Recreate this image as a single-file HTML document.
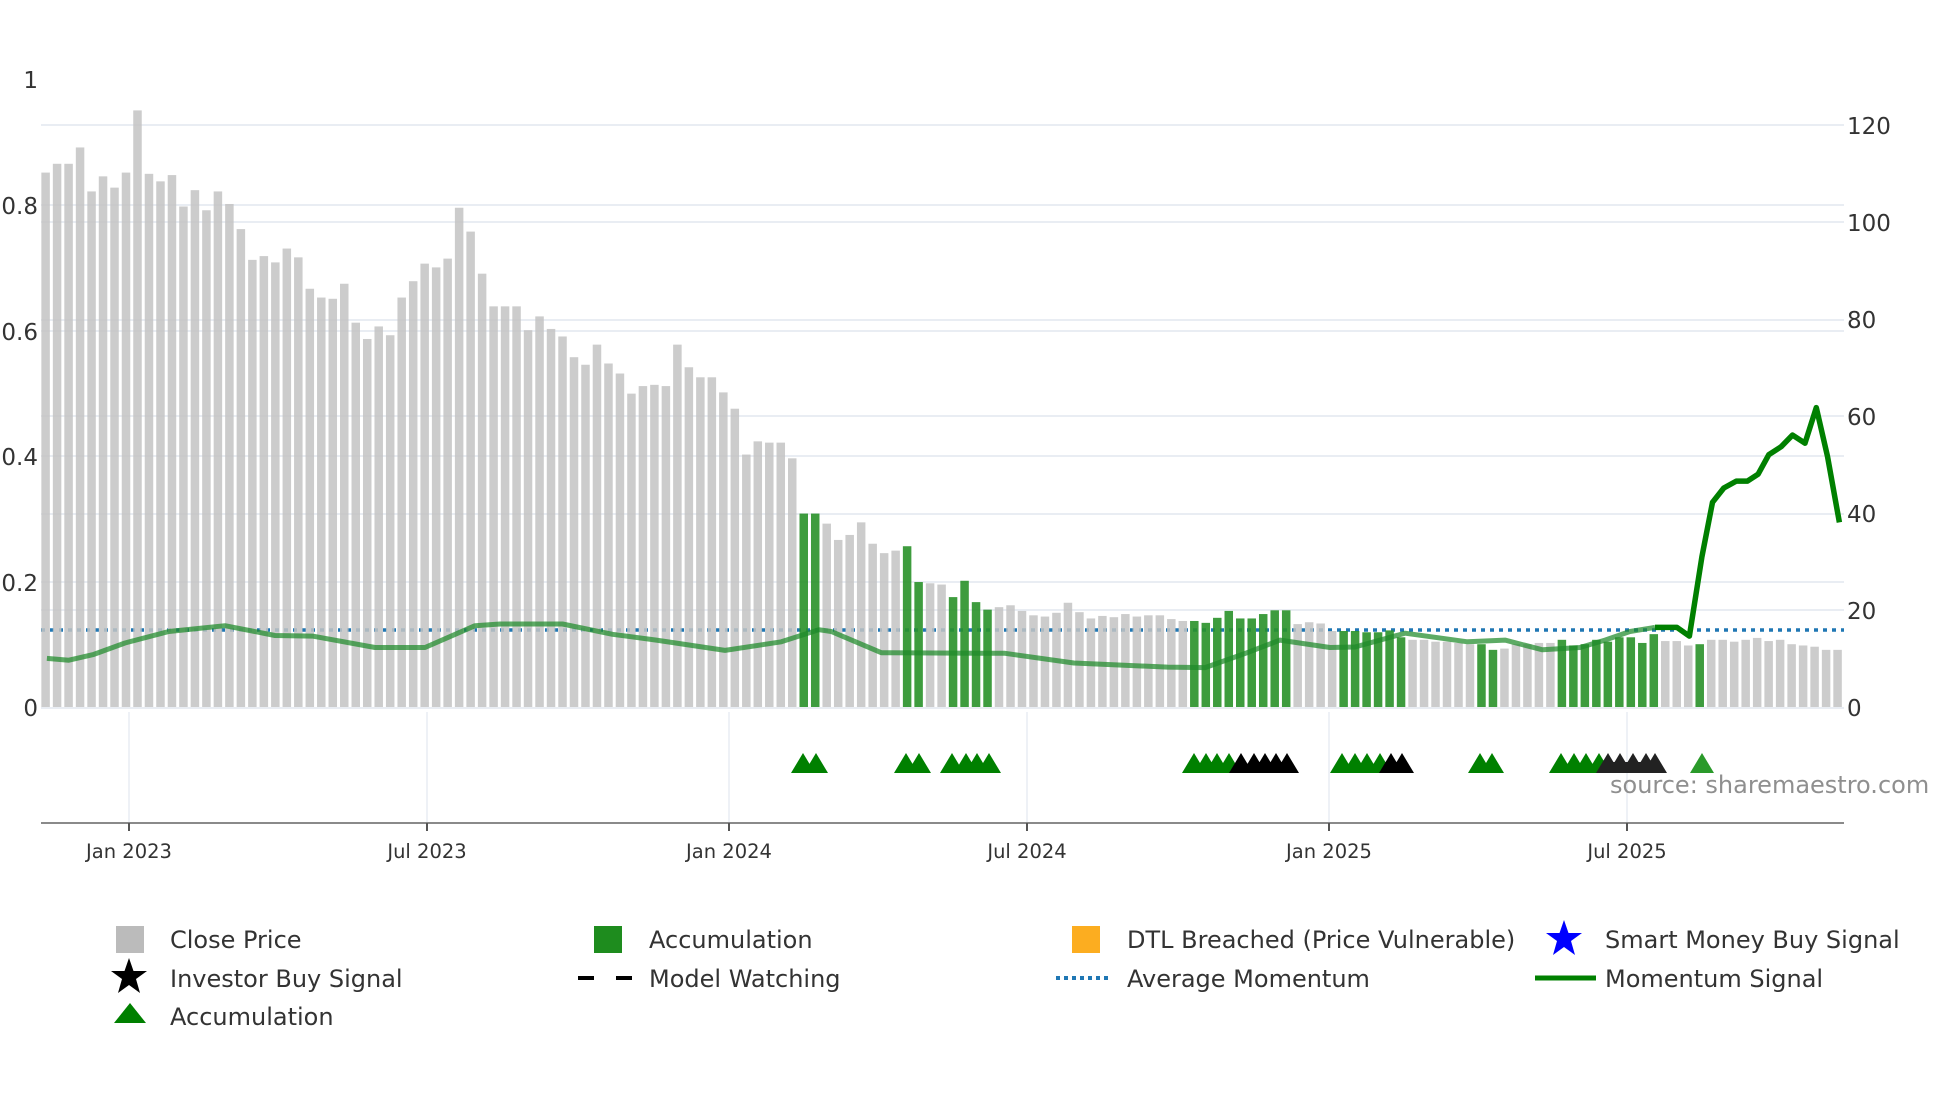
<!DOCTYPE html>
<html><head><meta charset="utf-8"><style>
html,body{margin:0;padding:0;background:#fff;width:1960px;height:1102px;overflow:hidden}
svg text{font-family:"DejaVu Sans","Liberation Sans",sans-serif}
</style></head><body>
<svg width="1960" height="1102" viewBox="0 0 1960 1102" xmlns="http://www.w3.org/2000/svg">
<rect width="1960" height="1102" fill="#fff"/>
<g stroke="#e9edf3" stroke-width="2">
<line x1="41" x2="1844" y1="125" y2="125"/><line x1="41" x2="1844" y1="205" y2="205"/>
<line x1="41" x2="1844" y1="222" y2="222"/><line x1="41" x2="1844" y1="320" y2="320"/>
<line x1="41" x2="1844" y1="331" y2="331"/><line x1="41" x2="1844" y1="416" y2="416"/>
<line x1="41" x2="1844" y1="456" y2="456"/><line x1="41" x2="1844" y1="514" y2="514"/>
<line x1="41" x2="1844" y1="582" y2="582"/><line x1="41" x2="1844" y1="610" y2="610"/>
<line x1="41" x2="1844" y1="708" y2="708"/>
</g>
<g stroke="#eef1f6" stroke-width="2">
<line x1="129" x2="129" y1="712" y2="823"/><line x1="427" x2="427" y1="712" y2="823"/>
<line x1="729" x2="729" y1="712" y2="823"/><line x1="1027" x2="1027" y1="712" y2="823"/>
<line x1="1329" x2="1329" y1="712" y2="823"/><line x1="1627" x2="1627" y1="712" y2="823"/>
</g>
<line x1="41" x2="1844" y1="630" y2="630" stroke="#1f77b4" stroke-width="3.5" stroke-dasharray="4 5"/>
<g transform="translate(45.6,707) scale(11.487,-628)" fill="#c4c4c4" opacity="0.86">
<rect x="-0.37" width="0.74" height=".851"/><rect x="0.63" width="0.74" height=".865"/><rect x="1.63" width="0.74" height=".865"/><rect x="2.63" width="0.74" height=".891"/><rect x="3.63" width="0.74" height=".821"/><rect x="4.63" width="0.74" height=".845"/><rect x="5.63" width="0.74" height=".827"/><rect x="6.63" width="0.74" height=".851"/><rect x="7.63" width="0.74" height=".950"/><rect x="8.63" width="0.74" height=".849"/>
<rect x="9.63" width="0.74" height=".837"/><rect x="10.63" width="0.74" height=".847"/><rect x="11.63" width="0.74" height=".797"/><rect x="12.63" width="0.74" height=".823"/><rect x="13.63" width="0.74" height=".791"/><rect x="14.63" width="0.74" height=".821"/><rect x="15.63" width="0.74" height=".801"/><rect x="16.63" width="0.74" height=".761"/><rect x="17.63" width="0.74" height=".712"/><rect x="18.63" width="0.74" height=".718"/>
<rect x="19.63" width="0.74" height=".708"/><rect x="20.63" width="0.74" height=".730"/><rect x="21.63" width="0.74" height=".716"/><rect x="22.63" width="0.74" height=".666"/><rect x="23.63" width="0.74" height=".652"/><rect x="24.63" width="0.74" height=".650"/><rect x="25.63" width="0.74" height=".674"/><rect x="26.63" width="0.74" height=".612"/><rect x="27.63" width="0.74" height=".586"/><rect x="28.63" width="0.74" height=".606"/>
<rect x="29.63" width="0.74" height=".592"/><rect x="30.63" width="0.74" height=".652"/><rect x="31.63" width="0.74" height=".678"/><rect x="32.63" width="0.74" height=".706"/><rect x="33.63" width="0.74" height=".700"/><rect x="34.63" width="0.74" height=".714"/><rect x="35.63" width="0.74" height=".795"/><rect x="36.63" width="0.74" height=".757"/><rect x="37.63" width="0.74" height=".690"/><rect x="38.63" width="0.74" height=".638"/>
<rect x="39.63" width="0.74" height=".638"/><rect x="40.63" width="0.74" height=".638"/><rect x="41.63" width="0.74" height=".600"/><rect x="42.63" width="0.74" height=".622"/><rect x="43.63" width="0.74" height=".602"/><rect x="44.63" width="0.74" height=".590"/><rect x="45.63" width="0.74" height=".557"/><rect x="46.63" width="0.74" height=".545"/><rect x="47.63" width="0.74" height=".577"/><rect x="48.63" width="0.74" height=".547"/>
<rect x="49.63" width="0.74" height=".531"/><rect x="50.63" width="0.74" height=".499"/><rect x="51.63" width="0.74" height=".511"/><rect x="52.63" width="0.74" height=".513"/><rect x="53.63" width="0.74" height=".511"/><rect x="54.63" width="0.74" height=".577"/><rect x="55.63" width="0.74" height=".541"/><rect x="56.63" width="0.74" height=".525"/><rect x="57.63" width="0.74" height=".525"/><rect x="58.63" width="0.74" height=".501"/>
<rect x="59.63" width="0.74" height=".475"/><rect x="60.63" width="0.74" height=".402"/><rect x="61.63" width="0.74" height=".423"/><rect x="62.63" width="0.74" height=".421"/><rect x="63.63" width="0.74" height=".421"/><rect x="64.63" width="0.74" height=".396"/>
<rect x="67.63" width="0.74" height=".292"/><rect x="68.63" width="0.74" height=".266"/><rect x="69.63" width="0.74" height=".274"/><rect x="70.63" width="0.74" height=".294"/><rect x="71.63" width="0.74" height=".260"/><rect x="72.63" width="0.74" height=".245"/><rect x="73.63" width="0.74" height=".249"/>
<rect x="76.63" width="0.74" height=".197"/><rect x="77.63" width="0.74" height=".195"/>
<rect x="82.63" width="0.74" height=".159"/><rect x="83.63" width="0.74" height=".162"/><rect x="84.63" width="0.74" height=".153"/><rect x="85.63" width="0.74" height=".146"/><rect x="86.63" width="0.74" height=".144"/><rect x="87.63" width="0.74" height=".150"/><rect x="88.63" width="0.74" height=".166"/><rect x="89.63" width="0.74" height=".151"/><rect x="90.63" width="0.74" height=".141"/><rect x="91.63" width="0.74" height=".145"/><rect x="92.63" width="0.74" height=".143"/><rect x="93.63" width="0.74" height=".148"/><rect x="94.63" width="0.74" height=".144"/><rect x="95.63" width="0.74" height=".146"/><rect x="96.63" width="0.74" height=".146"/><rect x="97.63" width="0.74" height=".140"/><rect x="98.63" width="0.74" height=".137"/>
<rect x="108.63" width="0.74" height=".132"/><rect x="109.63" width="0.74" height=".135"/><rect x="110.63" width="0.74" height=".133"/><rect x="111.63" width="0.74" height=".121"/>
<rect x="118.63" width="0.74" height=".107"/><rect x="119.63" width="0.74" height=".107"/><rect x="120.63" width="0.74" height=".104"/><rect x="121.63" width="0.74" height=".104"/><rect x="122.63" width="0.74" height=".102"/><rect x="123.63" width="0.74" height=".100"/>
<rect x="126.63" width="0.74" height=".093"/><rect x="127.63" width="0.74" height=".100"/><rect x="128.63" width="0.74" height=".100"/><rect x="129.63" width="0.74" height=".102"/><rect x="130.63" width="0.74" height=".102"/>
<rect x="140.63" width="0.74" height=".105"/><rect x="141.63" width="0.74" height=".105"/><rect x="142.63" width="0.74" height=".098"/>
<rect x="144.63" width="0.74" height=".107"/><rect x="145.63" width="0.74" height=".107"/><rect x="146.63" width="0.74" height=".104"/><rect x="147.63" width="0.74" height=".107"/><rect x="148.63" width="0.74" height=".110"/><rect x="149.63" width="0.74" height=".105"/><rect x="150.63" width="0.74" height=".107"/><rect x="151.63" width="0.74" height=".100"/><rect x="152.63" width="0.74" height=".098"/><rect x="153.63" width="0.74" height=".096"/><rect x="154.63" width="0.74" height=".091"/><rect x="155.63" width="0.74" height=".091"/>
</g>
<g transform="translate(45.6,707) scale(11.487,-628)" fill="#2a922a" opacity="0.9">
<rect x="65.63" width="0.74" height=".308"/><rect x="66.63" width="0.74" height=".308"/>
<rect x="74.63" width="0.74" height=".256"/><rect x="75.63" width="0.74" height=".199"/>
<rect x="78.63" width="0.74" height=".175"/><rect x="79.63" width="0.74" height=".201"/><rect x="80.63" width="0.74" height=".167"/><rect x="81.63" width="0.74" height=".155"/>
<rect x="99.63" width="0.74" height=".137"/><rect x="100.63" width="0.74" height=".134"/><rect x="101.63" width="0.74" height=".142"/><rect x="102.63" width="0.74" height=".153"/><rect x="103.63" width="0.74" height=".141"/><rect x="104.63" width="0.74" height=".141"/><rect x="105.63" width="0.74" height=".148"/><rect x="106.63" width="0.74" height=".154"/><rect x="107.63" width="0.74" height=".154"/>
<rect x="112.63" width="0.74" height=".121"/><rect x="113.63" width="0.74" height=".121"/><rect x="114.63" width="0.74" height=".119"/><rect x="115.63" width="0.74" height=".119"/><rect x="116.63" width="0.74" height=".122"/><rect x="117.63" width="0.74" height=".111"/>
<rect x="124.63" width="0.74" height=".100"/><rect x="125.63" width="0.74" height=".091"/>
<rect x="131.63" width="0.74" height=".107"/><rect x="132.63" width="0.74" height=".098"/><rect x="133.63" width="0.74" height=".100"/><rect x="134.63" width="0.74" height=".107"/><rect x="135.63" width="0.74" height=".104"/><rect x="136.63" width="0.74" height=".111"/><rect x="137.63" width="0.74" height=".111"/><rect x="138.63" width="0.74" height=".102"/><rect x="139.63" width="0.74" height=".116"/>
<rect x="143.63" width="0.74" height=".100"/>
</g>
<polyline fill="none" stroke="#1f8a2a" stroke-width="5" stroke-linejoin="round" opacity="0.72" points="46.9,658.4 68.8,660.2 93.8,654.4 125,643 168.8,631.5 225,625.7 275,635.5 312.5,636.1 375,647.5 425,647.5 475,625.7 500,624 562.5,624 612.5,634.3 656.3,640.1 725,650.4 781.3,641.8 818.8,629.7 831.3,631.5 881.3,652.7 980,653.3 1005,653.3 1073.8,663 1167.5,667.1 1205,667.6 1242.5,654.4 1280,640.1 1330,647.5 1355,647 1405,633.2 1467.5,641.8 1505,640.1 1542.5,649.8 1580,647.5 1605,640.1 1630,631.5 1655,627.4"/>
<polyline fill="none" stroke="#008000" stroke-width="5.5" stroke-linejoin="round" points="1655,627.4 1676.9,627.4 1689.4,636.1 1701.9,556.8 1712.5,502.3 1723.8,488 1736.3,481.1 1747.5,481.1 1758.1,474.2 1768.8,454.7 1781.3,446.6 1792.5,435.1 1805,443.2 1816.3,407.6 1827.5,456.4 1839.4,522.4"/>
<g fill="#008000">
<path d="M791 773 L803 753 L815 773Z M804 773 L816 753 L828 773Z"/>
<path d="M894 773 L906 753 L918 773Z M907 773 L919 753 L931 773Z"/>
<path d="M940 773 L952 753 L964 773Z M954 773 L966 753 L978 773Z M965 773 L977 753 L989 773Z M977 773 L989 753 L1001 773Z"/>
<path d="M1182 773 L1194 753 L1206 773Z M1194 773 L1206 753 L1218 773Z M1205 773 L1217 753 L1229 773Z M1217 773 L1229 753 L1241 773Z"/>
<path d="M1330 773 L1342 753 L1354 773Z M1343 773 L1355 753 L1367 773Z M1355 773 L1367 753 L1379 773Z M1368 773 L1380 753 L1392 773Z"/>
<path d="M1468 773 L1480 753 L1492 773Z M1480 773 L1492 753 L1504 773Z"/>
<path d="M1549 773 L1561 753 L1573 773Z M1562 773 L1574 753 L1586 773Z M1574 773 L1586 753 L1598 773Z M1587 773 L1599 753 L1611 773Z"/>
</g>
<path fill="#2a9a2a" d="M1690 773 L1702 753 L1714 773Z"/>
<g fill="#000">
<path d="M1229 773 L1241 753 L1253 773Z M1242 773 L1254 753 L1266 773Z M1253 773 L1265 753 L1277 773Z M1264 773 L1276 753 L1288 773Z M1275 773 L1287 753 L1299 773Z"/>
<path d="M1379 773 L1391 753 L1403 773Z M1390 773 L1402 753 L1414 773Z"/>
</g>
<g fill="#222">
<rect x="1605" y="762" width="46" height="11"/>
<path d="M1596 773 L1608 753 L1620 773Z M1608 773 L1620 753 L1632 773Z M1621 773 L1633 753 L1645 773Z M1634 773 L1646 753 L1658 773Z M1643 773 L1655 753 L1667 773Z"/>
</g>
<text x="1610" y="793" font-size="24" fill="#8f8f8f">source: sharemaestro.com</text>
<line x1="41" x2="1844" y1="823" y2="823" stroke="#8a8a8a" stroke-width="2"/>
<g stroke="#555" stroke-width="2">
<line x1="129" x2="129" y1="823" y2="831"/><line x1="427" x2="427" y1="823" y2="831"/><line x1="729" x2="729" y1="823" y2="831"/><line x1="1027" x2="1027" y1="823" y2="831"/><line x1="1329" x2="1329" y1="823" y2="831"/><line x1="1627" x2="1627" y1="823" y2="831"/>
</g>
<g font-size="19.5" fill="#333" text-anchor="middle">
<text x="129" y="858">Jan 2023</text><text x="427" y="858">Jul 2023</text><text x="729" y="858">Jan 2024</text><text x="1027" y="858">Jul 2024</text><text x="1329" y="858">Jan 2025</text><text x="1627" y="858">Jul 2025</text>
</g>
<g font-size="23" fill="#333" text-anchor="end">
<text x="38" y="88">1</text><text x="38" y="214">0.8</text><text x="38" y="340">0.6</text><text x="38" y="465">0.4</text><text x="38" y="591">0.2</text><text x="38" y="716">0</text>
</g>
<g font-size="23" fill="#333">
<text x="1847" y="134">120</text><text x="1847" y="231">100</text><text x="1847" y="328">80</text><text x="1847" y="425">60</text><text x="1847" y="522">40</text><text x="1847" y="619">20</text><text x="1847" y="716">0</text>
</g>
<g font-size="24" fill="#333">
<rect x="116" y="926" width="28" height="27" fill="#bbbbbb"/>
<text x="170" y="948">Close Price</text>
<path d="M129 958 L133.5 971 L147 971 L136 979 L140 993 L129 985 L118 993 L122 979 L111 971 L124.5 971Z" fill="#000"/>
<text x="170" y="987">Investor Buy Signal</text>
<path d="M114 1023 L130 1003 L146 1023Z" fill="#008000"/>
<text x="170" y="1025">Accumulation</text>
<rect x="594" y="926" width="28" height="27" fill="#1e8c1e"/>
<text x="649" y="948">Accumulation</text>
<g stroke="#000" stroke-width="4"><line x1="578" x2="594" y1="978" y2="978"/><line x1="616" x2="632" y1="978" y2="978"/></g>
<text x="649" y="987">Model Watching</text>
<rect x="1072" y="926" width="28" height="27" fill="#fcad20"/>
<text x="1127" y="948">DTL Breached (Price Vulnerable)</text>
<line x1="1056" x2="1111" y1="978" y2="978" stroke="#1f77b4" stroke-width="4" stroke-dasharray="4 4"/>
<text x="1127" y="987">Average Momentum</text>
<path d="M1564 920 L1568.5 933 L1582 933 L1571 941 L1575 955 L1564 947 L1553 955 L1557 941 L1546 933 L1559.5 933Z" fill="#0000ff"/>
<text x="1605" y="948">Smart Money Buy Signal</text>
<line x1="1535" x2="1596" y1="978" y2="978" stroke="#008000" stroke-width="5"/>
<text x="1605" y="987">Momentum Signal</text>
</g>
</svg>
</body></html>
